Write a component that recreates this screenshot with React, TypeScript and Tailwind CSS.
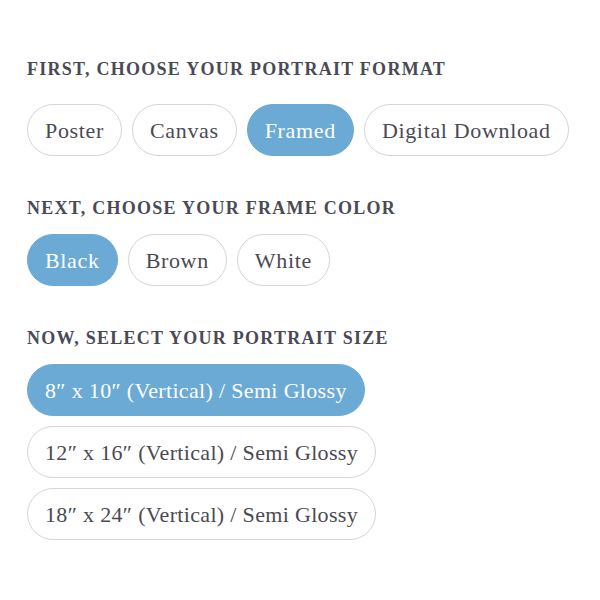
const formats = ["Poster", "Canvas", "Framed", "Digital Download"];
const colors = ["Black", "Brown", "White"];
const sizes = [
  "8\u2033 x 10\u2033 (Vertical) / Semi Glossy",
  "12\u2033 x 16\u2033 (Vertical) / Semi Glossy",
  "18\u2033 x 24\u2033 (Vertical) / Semi Glossy",
];

const Pill = ({ label, active, wide }: { label: string; active?: boolean; wide?: boolean }) => (
  <button
    className={
      (active
        ? "h-[52px] px-[17px] rounded-full bg-[#6aaad4] border border-[#6aaad4] text-white text-[22px] whitespace-nowrap"
        : "h-[52px] px-[17px] rounded-full bg-white border border-[#d6d6d8] text-[#4a4a55] text-[22px] whitespace-nowrap") +
      (wide ? " tracking-[0.015em]" : " tracking-[0.03em]")
    }
  >
    {label}
  </button>
);

const Heading = ({ children, first }: { children: string; first?: boolean }) => (
  <h2
    className={
      first
        ? "text-[18px] font-bold tracking-[0.07em] text-[#4a4a55] leading-none mb-[26px]"
        : "text-[18px] font-bold tracking-[0.07em] text-[#4a4a55] leading-none mb-[17px]"
    }
  >
    {children}
  </h2>
);

export default function App() {
  return (
    <div className="min-h-screen bg-white px-[27px] pt-[60px] font-['Liberation_Serif',serif]">
      <section className="mb-[43px]">
        <Heading first>FIRST, CHOOSE YOUR PORTRAIT FORMAT</Heading>
        <div className="flex gap-[10px]">
          {formats.map((f) => (
            <Pill key={f} label={f} active={f === "Framed"} />
          ))}
        </div>
      </section>
      <section className="mb-[43px]">
        <Heading>NEXT, CHOOSE YOUR FRAME COLOR</Heading>
        <div className="flex gap-[10px]">
          {colors.map((c) => (
            <Pill key={c} label={c} active={c === "Black"} />
          ))}
        </div>
      </section>
      <section>
        <Heading>NOW, SELECT YOUR PORTRAIT SIZE</Heading>
        <div className="flex flex-col items-start gap-[10px]">
          {sizes.map((s, i) => (
            <Pill key={s} label={s} active={i === 0} wide />
          ))}
        </div>
      </section>
    </div>
  );
}
